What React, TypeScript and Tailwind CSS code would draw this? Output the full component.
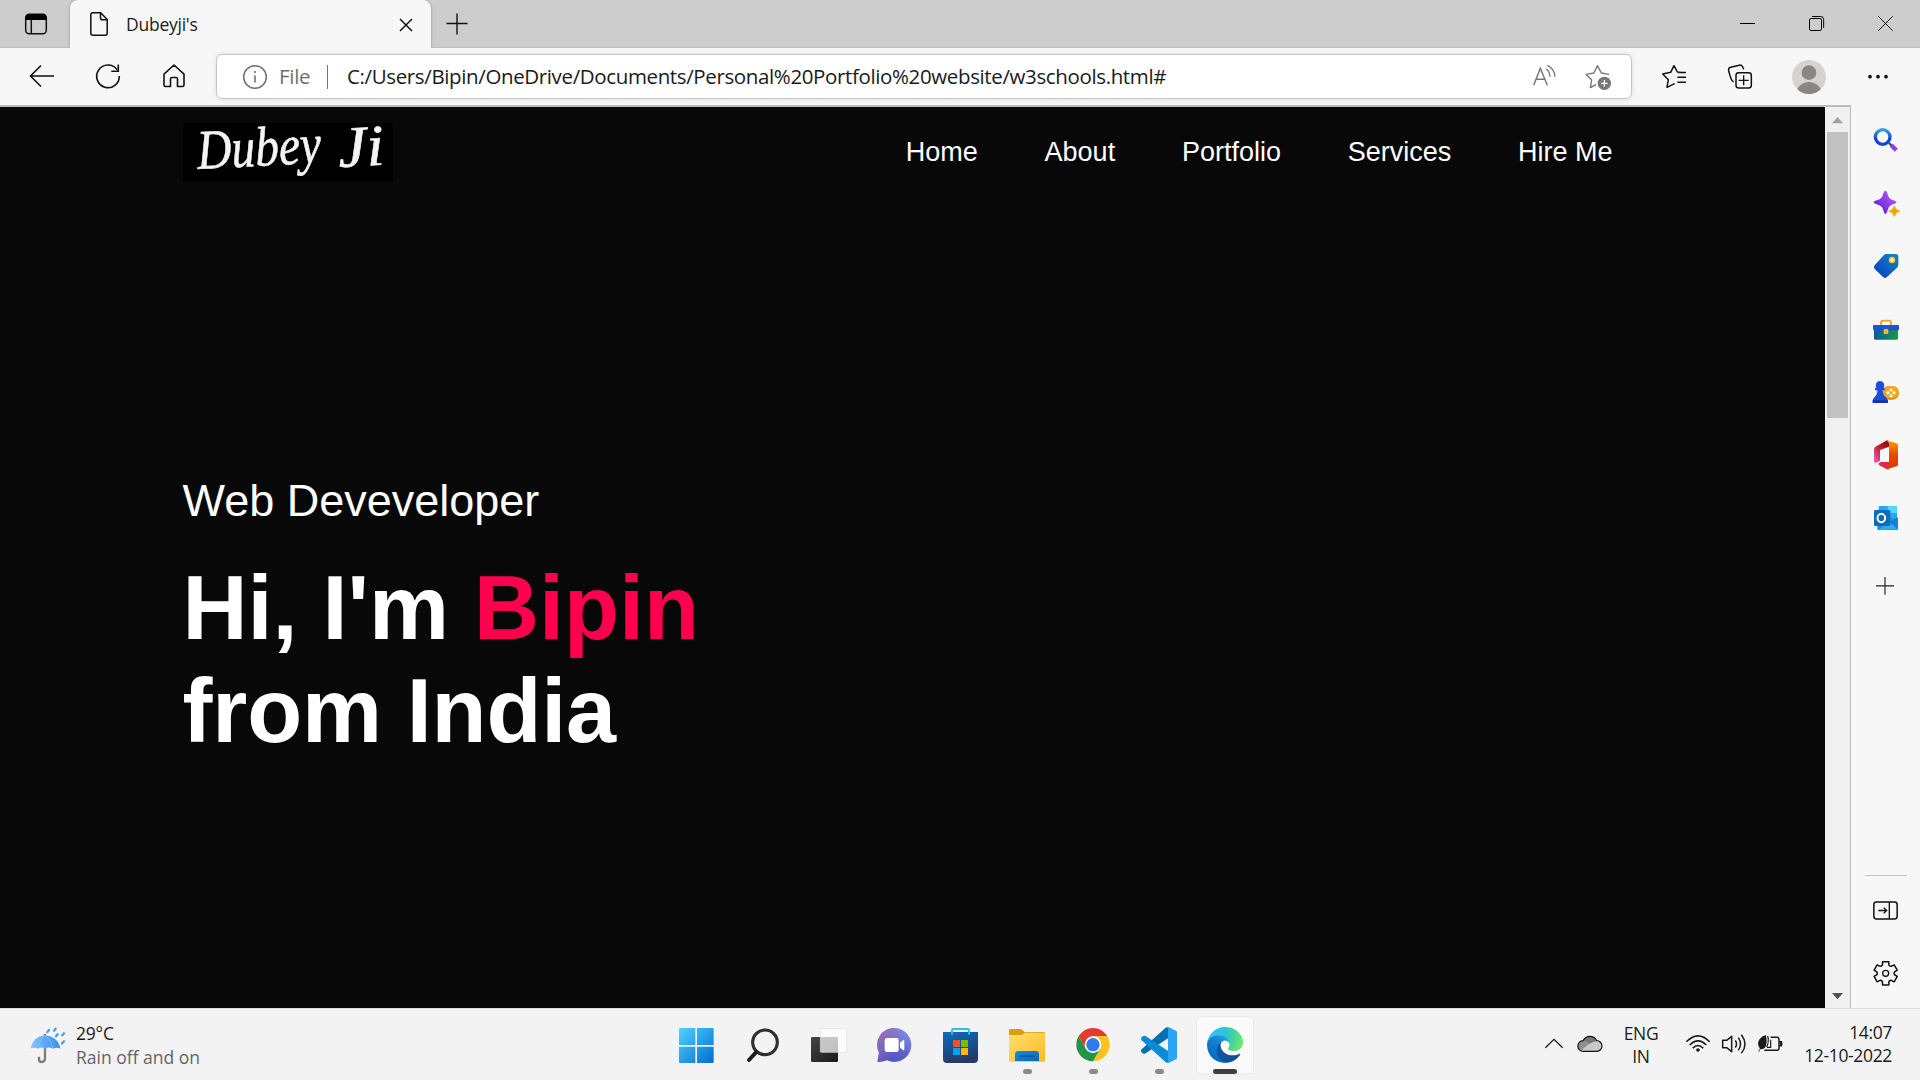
import React from "react";

type GlyphProps = { w: number; h: number; vb: string; children: React.ReactNode; className?: string };

function Glyph({ w, h, vb, children, className }: GlyphProps) {
  return (
    <svg width={w} height={h} viewBox={vb} fill="none" className={"block shrink-0 " + (className ?? "")}>
      {children}
    </svg>
  );
}

function TabStrip() {
  return (
    <div className="flex h-12 shrink-0 bg-[#cdcdcd] border-b border-[#bdbdbd]">
      <div className="flex w-[70px] shrink-0 items-center justify-center pl-0.5">
        <Glyph w={24} h={24} vb="0 0 24 24">
          <rect x="1.7" y="2.2" width="20.6" height="19.6" rx="3.5" stroke="#111" strokeWidth="1.5" />
          <path d="M1.5 8V5.5a3.5 3.5 0 0 1 3.5-3.500h14a3.500 3.500 0 0 1 3.500 3.500V8z" fill="#000" />
          <path d="M7.300 8v13.500" stroke="#111" strokeWidth="1.500" />
        </Glyph>
      </div>
      <div className="-mb-px flex w-[361px] shrink-0 items-center rounded-t-lg bg-[#f7f7f7] pl-[19px] shadow-[0_0_3px_rgba(0,0,0,0.3)] [clip-path:inset(0_-4px_0_-4px)]">
        <Glyph w={20} h={26} vb="0 0 20 26">
          <path d="M3.500 1.800h8.200L18.200 8.500v13.700a2 2 0 0 1-2 2H3.800a2 2 0 0 1-2-2V3.800a2 2 0 0 1 1.700-2zM11.500 2v5a1.800 1.800 0 0 0 1.800 1.800h4.700" stroke="#111" strokeWidth="1.500" strokeLinejoin="round" />
        </Glyph>
        <span className="ml-[17px] font-['Open_Sans',sans-serif] text-[17.5px] leading-6 tracking-[-0.25px] text-[#1b1b1b]">Dubeyji's</span>
        <Glyph w={14} h={14} vb="0 0 14 14" className="ml-auto mr-[18px] mt-px">
          <path d="M1 1l12 12M13 1L1 13" stroke="#111" strokeWidth="1.500" />
        </Glyph>
      </div>
      <Glyph w={22} h={22} vb="0 0 22 22" className="ml-[15px] mt-[13px]">
        <path d="M11 0.500v21M0.500 10.500h21" stroke="#111" strokeWidth="1.400" />
      </Glyph>
      <div className="ml-auto flex">
        <Glyph w={69} h={47} vb="939 0 207 141"><path d="M1020 70.500h45" stroke="#000" strokeWidth="3" /></Glyph>
        <Glyph w={69} h={47} vb="1146 0 207 141">
          <rect x="1228.500" y="55.500" width="36" height="36" rx="5" stroke="#000" strokeWidth="3" />
          <path d="M1236 49.500h26a9 9 0 0 1 9 9v25" stroke="#000" strokeWidth="3" />
        </Glyph>
        <Glyph w={69} h={47} vb="1353 0 207 141"><path d="M1435 49l43 43M1478 49l-43 43" stroke="#000" strokeWidth="2.800" /></Glyph>
      </div>
    </div>
  );
}

function Toolbar() {
  return (
    <div className="flex h-[59px] shrink-0 items-start border-b-2 border-[#bdbdbd] bg-[#f7f7f7] pl-[9px]">
      <Glyph w={66} h={57} vb="9 48 66 57">
        <path d="M54 76H31M41 65.500L30.500 76L41 86.500" stroke="#111" strokeWidth="1.600" />
      </Glyph>
      <Glyph w={66} h={57} vb="75 48 66 57">
        <path d="M117 69.500A11.300 11.300 0 1 0 119.300 76M118.300 64.500v6.800h-7" stroke="#111" strokeWidth="1.600" />
      </Glyph>
      <Glyph w={66} h={57} vb="141 48 66 57">
        <path d="M174 65L164 74.200V85a1.500 1.500 0 0 0 1.500 1.500h5V79a1.500 1.500 0 0 1 1.500-1.500h4a1.500 1.500 0 0 1 1.500 1.500v7.500h5A1.500 1.500 0 0 0 184 85V74.200z" stroke="#111" strokeWidth="1.600" strokeLinejoin="round" />
      </Glyph>
      <div className="ml-[9px] mt-1.5 flex h-[45px] w-[1416px] items-center rounded-md border border-[#c6c6c6] bg-white pl-[25px] shadow-[0_0_5px_rgba(0,0,0,0.12)]">
        <Glyph w={26} h={26} vb="0 0 26 26">
          <circle cx="13" cy="13" r="11.300" stroke="#707070" strokeWidth="1.500" />
          <path d="M13 11.500v7" stroke="#707070" strokeWidth="1.600" /><circle cx="13" cy="8" r="1.100" fill="#707070" />
        </Glyph>
        <span className="ml-[11px] w-[48px] whitespace-nowrap font-['Open_Sans',sans-serif] text-[20.5px] tracking-[-0.3px] text-[#6f6f6f]">File</span>
        <div className="h-6 w-px bg-[#767676]" />
        <span className="ml-[19px] whitespace-nowrap font-['Open_Sans',sans-serif] text-[20.5px] tracking-[-0.37px] text-[#1a1a1a]">
          C:/Users/Bipin/OneDrive/Documents/Personal%20Portfolio%20website/w3schools.html#
        </span>
        <div className="ml-auto flex pr-1.5">
          <Glyph w={54} h={43} vb="351 165 162 129">
            <path d="M401 256L421 205L442 256M408 238h27" stroke="#777" strokeWidth="4.500" />
            <path d="M438 207Q449 213 450 230M442 196Q463 205 465 230" stroke="#777" strokeWidth="4" />
          </Glyph>
          <Glyph w={54} h={43} vb="513 165 162 129">
            <path d="M627 223L604 219L592.500 197L582 219L558 223L575 240L571 263L588 254" stroke="#777" strokeWidth="4.200" strokeLinejoin="round" />
            <circle cx="613" cy="250" r="20" fill="#777" /><path d="M603 250h20M613 240v20" stroke="#fff" strokeWidth="3.500" />
          </Glyph>
        </div>
      </div>
      <div className="ml-auto flex pr-2">
        <Glyph w={66} h={57} vb="723 144 198 171">
          <path d="M841 217L832 216L822 197L812 217L788 222L805 239L801 262L824 251M834 217.500h24M832 232h26M832 247h26" stroke="#111" strokeWidth="4.500" strokeLinejoin="round" />
        </Glyph>
        <Glyph w={68} h={57} vb="921 144 204 171">
          <rect x="1008" y="218" width="46" height="46" rx="8" stroke="#111" strokeWidth="4.500" />
          <path d="M1031 226v30M1016 241h30" stroke="#111" strokeWidth="4" />
          <path d="M1001 245C992 243 992 232 986 212Q984 204 992 202L1018 195.500Q1027 194 1031 208" stroke="#111" strokeWidth="4.500" />
        </Glyph>
        <Glyph w={68} h={57} vb="1125 144 204 171">
          <clipPath id="avatar"><circle cx="1227" cy="231" r="51" /></clipPath>
          <circle cx="1227" cy="231" r="51" fill="#d5d3d0" />
          <circle cx="1227" cy="218" r="22" fill="#8b8683" />
          <ellipse cx="1227" cy="282" rx="38" ry="36" fill="#8b8683" clipPath="url(#avatar)" />
        </Glyph>
        <Glyph w={69} h={57} vb="1329 144 207 171">
          <circle cx="1410" cy="230" r="5.500" fill="#111" /><circle cx="1434" cy="230" r="5.500" fill="#111" /><circle cx="1458" cy="230" r="5.500" fill="#111" />
        </Glyph>
      </div>
    </div>
  );
}

function Website() {
  return (
    <div className="flex w-[1825px] shrink-0 flex-col bg-[#080808] px-[182.5px] font-['Liberation_Sans',sans-serif] text-white">
      <header className="flex items-start justify-between pt-4">
        <div className="h-[59px] w-[210px] bg-black">
          <svg width="210" height="59" viewBox="0 0 210 59" className="block overflow-visible font-['Liberation_Serif',serif] italic" fill="#f4f4f4" stroke="#f4f4f4" strokeWidth="0.600">
            <text x="15" y="46" fontSize="56" textLength="124" lengthAdjust="spacingAndGlyphs" transform="rotate(-3 15 46)">Dubey</text>
            <text x="156" y="44" fontSize="58" textLength="46" lengthAdjust="spacingAndGlyphs" transform="rotate(-3 156 44)">Ji</text>
          </svg>
        </div>
        <nav className="flex gap-[66.75px] pr-[30px] pt-[13px] text-[27px] leading-8">
          <a>Home</a>
          <a>About</a>
          <a>Portfolio</a>
          <a>Services</a>
          <a>Hire Me</a>
        </nav>
      </header>
      <main className="pt-[293px]">
        <p className="text-[45px] leading-[52px]">Web Deveveloper</p>
        <h1 className="mt-[30px] text-[90px] font-bold leading-[103px]">
          Hi, I'm <span className="text-[#ff004f]">Bipin</span>
          <br />
          <span className="tracking-[-0.15px]">from India</span>
        </h1>
      </main>
    </div>
  );
}

function Scrollbar() {
  return (
    <div className="flex w-[25px] shrink-0 flex-col items-center bg-[#f0f0f0]">
      <Glyph w={25} h={25} vb="0 0 25 25"><path d="M7 16.300L12.500 10L18 16.300z" fill="#a0a0a0" /></Glyph>
      <div className="h-[286px] w-[21px] bg-[#c1c1c1]" />
      <Glyph w={25} h={25} vb="0 0 25 25" className="mt-auto"><path d="M7 10L12.500 16.300L18 10z" fill="#505050" /></Glyph>
    </div>
  );
}

const gearPoints = Array.from({ length: 6 }, (_, k) => {
  const at = (deg: number, r: number) => {
    const a = ((k * 60 - 90 + deg) * Math.PI) / 180;
    return `${257 + r * Math.cos(a)},${400 + r * Math.sin(a)}`;
  };
  return [at(-21, 27), at(-15, 36), at(15, 36), at(21, 27), at(30, 25)].join(" ");
}).join(" ");

function Sidebar() {
  return (
    <aside className="-mt-0.5 flex w-[70px] shrink-0 flex-col items-center border-l-[1px] border-[#bdbdbd] bg-[#f7f7f7] pt-1">
      <Glyph w={69} h={63} vb="153 27 207 189">
        <defs>
          <linearGradient id="lens" x1="0" y1="0" x2="0" y2="1"><stop stopColor="#3aa0dd" /><stop offset=".6" stopColor="#1049cf" /></linearGradient>
          <linearGradient id="spark" x1="0" y1="1" x2="1" y2="0"><stop stopColor="#5214cf" /><stop offset="1" stopColor="#c463ff" /></linearGradient>
          <linearGradient id="tag" x1="0" y1="1" x2="1" y2="0"><stop stopColor="#0a38c2" /><stop offset="1" stopColor="#128bbd" /></linearGradient>
          <linearGradient id="box"><stop stopColor="#075d9b" /><stop offset="1" stopColor="#1b9844" /></linearGradient>
          <linearGradient id="offA" x1="1" y1="0" x2="0" y2="1"><stop stopColor="#7b0d0d" /><stop offset=".5" stopColor="#c8202c" /><stop offset="1" stopColor="#e36ac6" /></linearGradient>
          <linearGradient id="offB" x1="0" y1="0" x2="0" y2="1"><stop stopColor="#ffa000" /><stop offset=".5" stopColor="#e64a00" /><stop offset="1" stopColor="#d83a00" /></linearGradient>
        </defs>
        <path d="M267 129l12 12" stroke="#444" strokeWidth="7" />
        <path d="M274 136l15 15" stroke="#8c3df0" strokeWidth="13" />
        <circle cx="248" cy="111" r="22" stroke="url(#lens)" strokeWidth="10" fill="#f7fafe" />
      </Glyph>
      <Glyph w={69} h={63} vb="153 216 207 189">
        <path d="M256 272Q261 272 264 286Q267 298 280 301Q290 304 290 307Q290 310 279 313Q267 316 264 328Q260 342 256 342Q252 342 249 328Q246 317 234 314Q221 311 221 307Q221 303 233 300Q245 297 248 286Q252 272 256 272z" fill="url(#spark)" />
        <path d="M283 317Q286 330 300 333Q286 337 283 350Q280 337 266 333Q280 330 283 317z" fill="#f0a50c" stroke="#f0a50c" strokeWidth="2" />
      </Glyph>
      <Glyph w={69} h={63} vb="153 405 207 189">
        <path d="M258 462H288Q295 462 295 469V494Q295 499 291 503L260 532Q255 536 250 532L224 507Q219 502 224 496L251 466Q254 462 258 462z" fill="url(#tag)" />
        <circle cx="276" cy="480" r="7.500" stroke="#ffc02e" strokeWidth="4.500" fill="#fff3b0" />
      </Glyph>
      <Glyph w={69} h={63} vb="153 594 207 189">
        <path d="M243 680V668Q243 662 249 662H267Q273 662 273 668V680" stroke="#eba51b" strokeWidth="5.500" />
        <rect x="222" y="682" width="72" height="37" rx="4" fill="url(#box)" />
        <rect x="219" y="675" width="78" height="16" rx="3" fill="#1a56cf" />
        <rect x="251" y="687" width="14" height="15" rx="4" fill="#ffb62e" />
      </Glyph>
      <Glyph w={69} h={63} vb="153 3 207 189">
        <rect x="247" y="78" width="50" height="41" rx="20" fill="#d28a0d" />
        <rect x="248" y="78" width="48" height="37" rx="18" fill="#f0a91f" />
        <g fill="#fff"><circle cx="273" cy="90" r="4.500" /><circle cx="273" cy="107" r="4.500" /><circle cx="264" cy="98" r="4.500" /><circle cx="282" cy="98" r="4.500" /></g>
        <path d="M240 63a13 13 0 0 1 11 20h3v8h-6q0 14 11 22q6 5 5 15H218Q216 118 222 113Q232 105 232 91H225V83h4A13 13 0 0 1 240 63z" fill="#1b4fd6" />
        <path d="M219 121h45v4a4 4 0 0 1-4 4h-38a4 4 0 0 1-4-4z" fill="#1033b0" />
      </Glyph>
      <Glyph w={69} h={63} vb="153 192 207 189">
        <path d="M261 241L226 260Q222 263 222 268V305Q222 310 228 308L239 304Q240 303 240 300V270L267 260V243z" fill="url(#offA)" />
        <path d="M236 310L243 306H268V328H260L238 316Q235 313 236 310z" fill="#e1274b" />
        <path d="M259 241L290 250Q294 252 294 256V314Q294 318 290 319L260 328Q267 325 267 318V250z" fill="url(#offB)" />
      </Glyph>
      <Glyph w={69} h={63} vb="153 381 207 189">
        <rect x="236" y="438" width="55" height="40" rx="3" fill="#28a8ea" />
        <path d="M263 438h25a3 3 0 0 1 3 3v18h-28z" fill="#50d9ff" />
        <path d="M236 459h27v25h-27z" fill="#0364b8" />
        <path d="M232 478L294 474V507Q294 510 291 510H235Q232 510 232 507z" fill="#1490df" />
        <path d="M268 487L294 472V506z" fill="#1a7fd0" /><path d="M236 510L268 487L294 508z" fill="#28b0f0" />
        <rect x="222" y="450" width="49" height="48" rx="4" fill="#0f6cbd" />
        <ellipse cx="244" cy="474" rx="11.500" ry="12.500" stroke="#fff" strokeWidth="6" />
      </Glyph>
      <Glyph w={69} h={63} vb="153 570 207 189"><path d="M255 651v53M228 677.500h54" stroke="#222" strokeWidth="3.500" /></Glyph>
      <div className="mt-auto h-px w-[42px] bg-[#c4c4c4]" />
      <Glyph w={69} h={66} vb="153 108 207 198">
        <rect x="221.500" y="186" width="70" height="51" rx="8" stroke="#111" strokeWidth="4.500" />
        <path d="M268 186v51M235 211.500h24M251 203l9 8.500l-9 8.500" stroke="#111" strokeWidth="4" />
      </Glyph>
      <Glyph w={69} h={66} vb="153 306 207 198">
        <polygon points={gearPoints} stroke="#111" strokeWidth="4.500" strokeLinejoin="round" />
        <circle cx="257" cy="400" r="9" stroke="#111" strokeWidth="4" />
      </Glyph>
    </aside>
  );
}

function TaskbarApps() {
  return (
    <div className="flex shrink-0">
      <Glyph w={66} h={72} vb="9 24 198 216">
        <defs>
          <linearGradient id="win" gradientUnits="userSpaceOnUse" x1="57" y1="84" x2="161" y2="189"><stop stopColor="#4fd4ff" /><stop offset="1" stopColor="#006cd2" /></linearGradient>
        </defs>
        <path d="M60 84h46v51H57V87a3 3 0 0 1 3-3zM111 84h47a3 3 0 0 1 3 3v48h-50zM57 140h49v49H60a3 3 0 0 1-3-3zM111 140h50v46a3 3 0 0 1-3 3h-47z" fill="url(#win)" />
      </Glyph>
      <Glyph w={66} h={72} vb="207 24 198 216">
        <circle cx="315" cy="127" r="37" stroke="#2f2f2f" strokeWidth="9.500" />
        <path d="M289 156l-22 24" stroke="#1d1d1d" strokeWidth="12" strokeLinecap="round" />
      </Glyph>
      <Glyph w={66} h={72} vb="405 24 198 216">
        <defs>
          <linearGradient id="tv" x1="0" y1="0" x2="1" y2="1"><stop stopColor="#444" /><stop offset="1" stopColor="#1a1a1a" /></linearGradient>
        </defs>
        <rect x="453" y="111" width="81" height="75" rx="4" fill="url(#tv)" />
        <rect x="481" y="86" width="79" height="71" rx="3" fill="#fff" fillOpacity=".72" stroke="#dcdcdc" strokeWidth="2" />
      </Glyph>
      <Glyph w={66} h={72} vb="603 24 198 216">
        <defs>
          <linearGradient id="chat" x1=".2" y1="1" x2=".7" y2="0"><stop stopColor="#5055c4" /><stop offset=".4" stopColor="#5b5fc7" /><stop offset="1" stopColor="#7f90e8" /></linearGradient>
          <linearGradient id="chat2" x1="0" y1=".2" x2=".6" y2=".6"><stop stopColor="#9a6bb0" /><stop offset="1" stopColor="#9a6bb0" stopOpacity="0" /></linearGradient>
        </defs>
        <path d="M703 84a51 51 0 1 1-22 97Q667 187 654 186Q651 185 653 180L657 158A51 51 0 0 1 703 84z" fill="url(#chat)" />
        <path d="M703 84a51 51 0 1 1-22 97Q667 187 654 186Q651 185 653 180L657 158A51 51 0 0 1 703 84z" fill="url(#chat2)" />
        <rect x="674" y="114" width="42" height="42" rx="7" fill="#fff" />
        <path d="M720 128l10-8q3-1 3 3v25q0 4-3 3l-10-8z" fill="#fff" />
      </Glyph>
      <Glyph w={66} h={72} vb="801 24 198 216">
        <defs>
          <linearGradient id="store" x1="0" y1="0" x2=".3" y2="1"><stop stopColor="#0a6cc0" /><stop offset="1" stopColor="#243a66" /></linearGradient>
        </defs>
        <path d="M849 96h105v81a12 12 0 0 1-12 12h-81a12 12 0 0 1-12-12z" fill="url(#store)" />
        <path d="M876 104V90q0-3 3-3h45q3 0 3 3v14" stroke="#1fc3f5" strokeWidth="5.500" />
        <path d="M879 120h21v21h-21z" fill="#f25022" /><path d="M903 120h21v21h-21z" fill="#7fba00" />
        <path d="M879 144h21v21h-21z" fill="#00a4ef" /><path d="M903 144h21v21h-21z" fill="#ffb900" />
      </Glyph>
      <Glyph w={66} h={72} vb="99 24 198 216">
        <defs>
          <linearGradient id="fold" x1="0" y1="0" x2="1" y2="1"><stop stopColor="#ffdf75" /><stop offset="1" stopColor="#fcba1c" /></linearGradient>
          <linearGradient id="foldb" x1="0" y1="0" x2="1" y2="1"><stop stopColor="#1390df" /><stop offset="1" stopColor="#0c62b4" /></linearGradient>
        </defs>
        <path d="M147 90q0-3 3-3h30q4 0 7 3l7 6h58q3 0 3 3v20H147z" fill="#dc9f0c" />
        <path d="M147 105h36q4 0 7-3l5-4h60v84q0 3-3 3h-102q-3 0-3-3z" fill="url(#fold)" />
        <path d="M165 183v-20a10 10 0 0 1 10-10h52a10 10 0 0 1 10 10v20z" fill="url(#foldb)" />
        <path d="M180 168.500h42" stroke="#0a4a91" strokeWidth="4" strokeLinecap="round" />
        <rect x="189" y="207" width="27" height="15" rx="7.500" fill="#8a8a8a" />
      </Glyph>
      <Glyph w={66} h={72} vb="297 24 198 216">
        <path d="M355.700 109A50 50 0 0 1 442.300 109H399L377.350 146.500z" fill="#e33b2e" />
        <path d="M442.300 109A50 50 0 0 1 399 184L420.650 146.500L399 109z" fill="#fcc31e" />
        <path d="M399 184A50 50 0 0 1 355.700 109L377.350 146.500H420.650z" fill="#219447" />
        <circle cx="399" cy="134" r="25" fill="#fff" /><circle cx="399" cy="134" r="20" fill="#2f7bee" />
        <rect x="387" y="207" width="27" height="15" rx="7.500" fill="#8a8a8a" />
      </Glyph>
      <Glyph w={66} h={72} vb="495 24 198 216">
        <path d="M624 81V115L557 160Q552 163 548 160L544 156Q541 152 545 148L617 83Q620 81 624 81z" fill="#0070b3" />
        <path d="M624 189V153L557 108Q552 106 548 109L544 113Q541 117 545 121L617 187Q620 189 624 189z" fill="#0a8bd6" />
        <path d="M620 81.500Q623 80 627 82L648 92Q651 94 651 97V173Q651 176 648 178L627 188Q623 190 620 188Q624 188 624 182V88Q624 83 620 81.500z" fill="#29a5f3" />
        <rect x="585" y="207" width="27" height="15" rx="7.500" fill="#8a8a8a" />
      </Glyph>
      <Glyph w={66} h={72} vb="693 24 198 216">
        <defs>
          <linearGradient id="eA" gradientUnits="userSpaceOnUse" x1="59" y1="177" x2="236" y2="177"><stop stopColor="#0c59a4" /><stop offset="1" stopColor="#114a8b" /></linearGradient>
          <linearGradient id="eB" gradientUnits="userSpaceOnUse" x1="150" y1="90" x2="40" y2="230"><stop stopColor="#1b9de2" /><stop offset=".4" stopColor="#1180d0" /><stop offset="1" stopColor="#0668c8" /></linearGradient>
          <radialGradient id="eC" gradientUnits="userSpaceOnUse" cx="25" cy="45" r="230"><stop stopColor="#35c1f1" /><stop offset=".45" stopColor="#2fc2df" /><stop offset=".72" stopColor="#45d29a" /><stop offset="1" stopColor="#66eb6e" /></radialGradient>
        </defs>
        <rect x="709.500" y="49.500" width="171" height="172" rx="13" fill="#fafafa" stroke="#e8e8e8" strokeWidth="3" />
        <g transform="translate(741 81) scale(.422)">
          <path d="M231 190.500c-3.400 1.800-6.900 3.400-10.500 4.700a101.500 101.500 0 0 1-35.900 6.400c-47.300 0-88.500-32.500-88.500-74.300a31.500 31.500 0 0 1 16.400-27.300c-42.800 1.800-53.800 46.400-53.800 72.500 0 74 68.100 81.400 82.800 81.400 7.900 0 19.800-2.300 27-4.600l1.300-.4a128.300 128.300 0 0 0 66.600-52.800 4 4 0 0 0-5.400-5.600z" fill="url(#eA)" />
          <path d="M105.700 241.400a79.200 79.200 0 0 1-22.700-21.300 80.700 80.700 0 0 1 29.500-120c3.200-1.500 8.500-4.100 15.600-4a32.400 32.400 0 0 1 25.700 13 31.900 31.900 0 0 1 6.300 18.700c0-.2 24.500-79.600-80-79.600-43.900 0-80 41.600-80 78.200a130.200 130.200 0 0 0 12.100 56 128 128 0 0 0 156.400 67 75.500 75.500 0 0 1-62.800-8z" fill="url(#eB)" />
          <path d="M152.300 148.900c-.8 1-3.300 2.500-3.300 5.700 0 2.600 1.700 5.100 4.700 7.200 14.400 10 41.500 8.700 41.600 8.700a59.600 59.600 0 0 0 30.300-8.400A61.400 61.400 0 0 0 256 109.200c.3-22.300-8-37.200-11.300-43.800C223.500 24 177.700 0 128 0A128 128 0 0 0 0 126.200c.5-36.500 36.800-66 80-66 3.500 0 23.500.3 42 10a72.600 72.600 0 0 1 30.900 29.300c6.100 10.600 7.200 24.100 7.200 29.500s-2.700 13.300-7.800 19.900z" fill="url(#eC)" />
        </g>
        <rect x="759" y="207" width="72" height="15" rx="7.500" fill="#3e3e3e" />
      </Glyph>
    </div>
  );
}

function Taskbar() {
  return (
    <footer className="flex h-[72px] shrink-0 bg-[#f3f3f3] font-['Open_Sans',sans-serif] text-[17.5px] leading-[23px] text-[#1b1b1b] shadow-[inset_0_1px_0_#dedede]">
      <div className="flex w-[663px] shrink-0 pl-6">
        <Glyph w={50} h={72} vb="72 24 150 216">
          <defs>
            <linearGradient id="umb"><stop stopColor="#8ac6fb" /><stop offset=".5" stopColor="#5aa9f5" /><stop offset="1" stopColor="#3c8fe6" /></linearGradient>
          </defs>
          <path d="M135 102v72q0 12-10 12q-8 0-8-10v-6" stroke="#7b7b7b" strokeWidth="7" />
          <path d="M135 106Q174 110 181 146Q170 140 159 146Q147 139 135 146Q124 139 114 146Q102 140 91 146Q98 110 135 106z" fill="url(#umb)" />
          <path d="M135 106Q120 118 114 146M135 106Q152 118 159 146" stroke="#8ec9fb" strokeWidth="2" />
          <path d="M142 96l5-6M162 92l5-6M168 109l5-6M187 106l5-6M186 130l6-6" stroke="#4b9fea" strokeWidth="7" strokeLinecap="round" />
        </Glyph>
        <div className="ml-0.5 pt-3.5">
          <div className="tracking-[-0.2px]">29°C</div>
          <div className="mt-px whitespace-nowrap text-[#636363]">Rain off and on</div>
        </div>
      </div>
      <TaskbarApps />
      <div className="ml-auto flex pr-[28px]">
        <Glyph w={32} h={72} vb="54 24 96 216"><path d="M76 143l26-25l26 25" stroke="#1a1a1a" strokeWidth="4" /></Glyph>
        <Glyph w={40} h={72} vb="150 24 120 216">
          <path d="M190 154a16 16 0 0 1-1-32Q196 109 210 109Q224 109 230 122A16 16 0 0 1 230 154z" fill="#c9c9c9" />
          <path d="M190 154a16 16 0 0 1-1-32Q197 120 208 131L182 152z" fill="#8e8e8e" />
          <path d="M189 122Q196 109 210 109Q224 109 230 122L208 131Q199 121 189 122z" fill="#777" />
          <path d="M190 154a16 16 0 0 1-1-32Q196 109 210 109Q224 109 230 122A16 16 0 0 1 230 154z" stroke="#111" strokeWidth="3.500" />
        </Glyph>
        <div className="w-[62px] pt-3.5 text-center tracking-[-0.3px]">
          <div>ENG</div>
          <div>IN</div>
        </div>
        <Glyph w={118} h={72} vb="456 24 354 216">
          <g stroke="#1a1a1a" strokeWidth="4.500">
            <path d="M499 125Q534 90 569 125M509 135Q534 110 559 135M518 145Q534 128 550 145" />
            <path d="M608 121h12l15-12v46l-15-12h-12z" strokeLinejoin="round" />
            <path d="M646 121q7 11 0 22M655 113q13 19 0 38M664 104q22 28 0 56" />
            <path d="M752 112h19q6 0 6 6v27q0 6-6 6h-38M779 125h5v12h-5" />
          </g>
          <circle cx="534" cy="150" r="5.500" fill="#1a1a1a" />
          <path d="M780 124h3q4 0 4 4v6q0 4-4 4h-3z" fill="#1a1a1a" />
          <path d="M715 154L720 146Q709 130 719 117Q727 107 738 106Q742 124 738 137Q733 149 722 147L717 155z" fill="#1a1a1a" />
          <path d="M743 108q5 16-3 34M752 119v23h-11" stroke="#1a1a1a" strokeWidth="3.500" />
        </Glyph>
        <div className="w-[102px] whitespace-nowrap pt-[13px] text-right tracking-[-0.35px]">
          <div>14:07</div>
          <div>12-10-2022</div>
        </div>
      </div>
    </footer>
  );
}

export default function App() {
  return (
    <div className="flex h-[1080px] w-[1920px] flex-col overflow-hidden bg-[#f7f7f7]">
      <TabStrip />
      <Toolbar />
      <div className="flex min-h-0 flex-1">
        <Website />
        <Scrollbar />
        <Sidebar />
      </div>
      <Taskbar />
    </div>
  );
}
